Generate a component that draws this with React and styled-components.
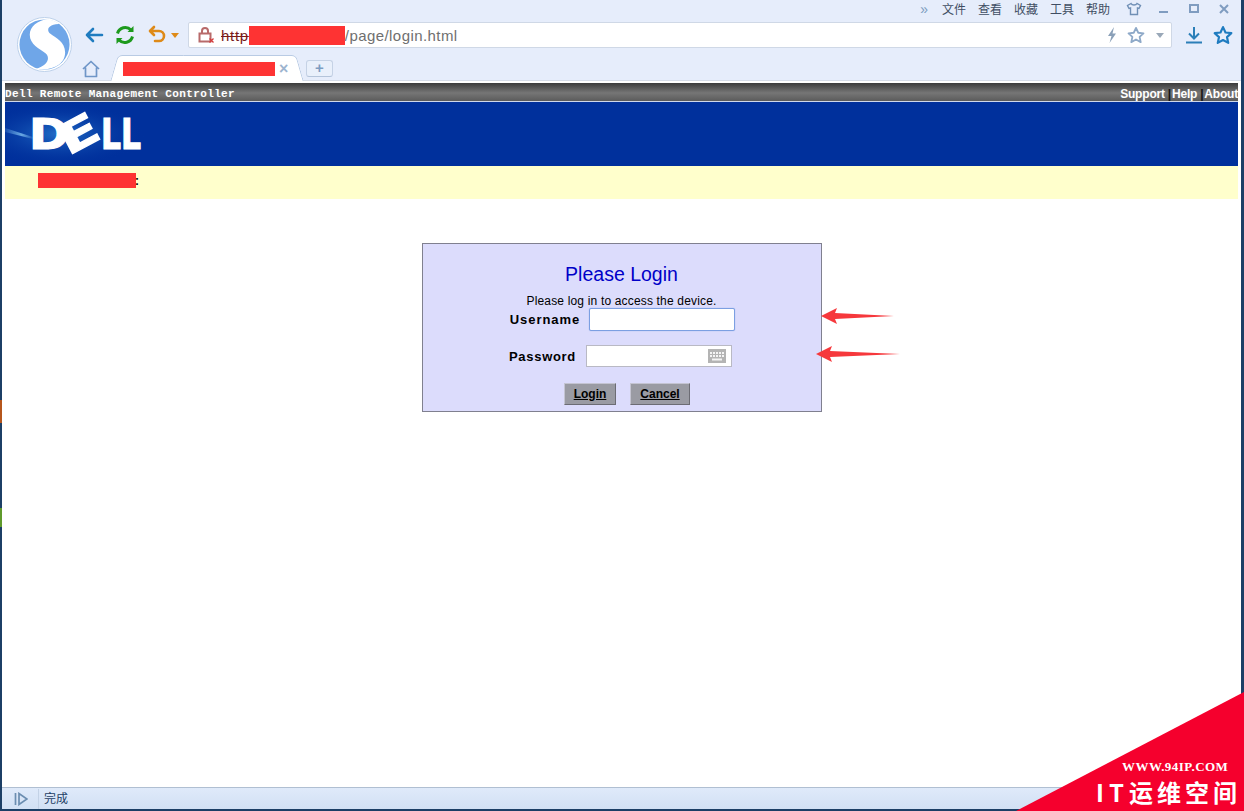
import React from "react";
import styled, { createGlobalStyle } from "styled-components";

const Global = createGlobalStyle`
  html, body { margin: 0; padding: 0; background: #fff; }
  * { box-sizing: border-box; }
`;

const UI = `"Liberation Sans", "Noto Sans CJK SC", sans-serif`;

const Screen = styled.div`
  position: relative;
  width: 1244px;
  height: 811px;
  overflow: hidden;
  font-family: ${UI};
`;

const Frame = styled.div`
  width: 100%;
  height: 100%;
  display: flex;
  flex-direction: column;
  border-left: 2px solid #1c3f66;
  border-right: 3px solid #1c3f66;
  border-bottom: 2px solid #1c3f66;
`;

const Chrome = styled.header`
  flex: none;
  height: 81px;
  display: flex;
  background: #e6edfb;
`;

const LogoCell = styled.div`
  flex: none;
  width: 82px;
  padding: 16px 0 0 14px;
`;

const ChromeRows = styled.div`
  flex: 1;
  min-width: 0;
  display: flex;
  flex-direction: column;
`;

const MenuRow = styled.div`
  height: 18px;
  display: flex;
  justify-content: flex-end;
  align-items: center;
  padding-right: 2px;
  color: #3f4d63;
  font-size: 12px;
`;

const MenuItem = styled.span`
  width: 24px;
  margin-left: 12px;
  font-family: "Noto Sans CJK SC", sans-serif;
  line-height: 18px;
  white-space: nowrap;
`;

const WinButton = styled.span`
  width: 30px;
  display: flex;
  justify-content: center;
  margin-left: ${(p) => p.$left || 0}px;
`;

const Chevrons = styled.span`
  color: #7c9cc0;
  font-size: 14px;
  margin-right: 2px;
`;

const NavRow = styled.div`
  height: 34px;
  display: flex;
  align-items: center;
`;

const NavIcon = styled.span`
  flex: none;
  display: flex;
  align-items: center;
  margin-left: ${(p) => p.$left || 0}px;
  margin-bottom: ${(p) => p.$bottom || 0}px;
`;

const UrlBar = styled.div`
  flex: none;
  width: 984px;
  height: 26px;
  margin: 0 0 0 9px;
  display: flex;
  align-items: center;
  background: #fff;
  border: 1px solid #cfd8e6;
  border-radius: 2px;
  padding: 0 7px 0 9px;
  font-size: 15px;
`;

const UrlScheme = styled.span`
  margin-left: 6px;
  color: #7a1a1a;
  letter-spacing: 0.7px;
  text-decoration: line-through;
`;

const Redacted = styled.span`
  display: inline-block;
  flex: none;
  background: #fe3333;
  width: ${(p) => p.$w}px;
  height: ${(p) => p.$h}px;
`;

const UrlPath = styled.span`
  color: #6f6f6f;
  flex: 1;
  letter-spacing: 0.43px;
`;

const TabRow = styled.div`
  height: 29px;
  display: flex;
  align-items: flex-end;
`;

const Tab = styled.div`
  position: relative;
  flex: none;
  width: 186px;
  height: 26px;
  margin-left: 14px;
  display: flex;
  align-items: center;
  padding: 1px 0 0 9px;
  &::before, &::after {
    content: "";
    position: absolute;
    top: 0;
    bottom: 0;
    width: 60%;
    background: #fff;
    border-top: 1px solid #b9cbe4;
    z-index: 0;
  }
  &::before {
    left: 0;
    border-left: 1px solid #b9cbe4;
    border-top-left-radius: 5px;
    transform: skewX(-16deg);
  }
  &::after {
    right: 0;
    border-right: 1px solid #b9cbe4;
    border-top-right-radius: 5px;
    transform: skewX(16deg);
  }
  & > * { position: relative; z-index: 1; }
`;

const TabClose = styled.span`
  margin-left: 4px;
  color: #9db4cf;
  font-size: 16px;
  font-weight: bold;
  line-height: 1;
`;

const NewTab = styled.div`
  flex: none;
  width: 27px;
  height: 17px;
  margin: 0 0 4px 6px;
  border: 1px solid #c5d2e5;
  border-bottom-color: #b4c4da;
  border-radius: 3px;
  background: #e9f0fb;
  color: #7d9cc1;
  font-size: 15px;
  font-weight: bold;
  line-height: 14px;
  text-align: center;
`;

const Viewport = styled.main`
  flex: 1;
  min-height: 0;
  background: #fff;
  padding: 2px 3px 0;
  border-top: 1px solid #d6dde9;
  margin-top: -1px;
`;

const DracBar = styled.div`
  height: 19px;
  display: flex;
  justify-content: space-between;
  align-items: center;
  padding-top: 3px;
  background: linear-gradient(#3b3b3b 0, #5c5c5c 30%, #767676 55%, #5b5b5b 100%);
  border-bottom: 1px solid #cfd8ea;
  color: #fff;
  font-weight: bold;
`;

const DracTitle = styled.span`
  font-family: "Liberation Mono", monospace;
  font-size: 11px;
  letter-spacing: 0.37px;
  white-space: nowrap;
`;

const DracLinks = styled.nav`
  display: flex;
  font-size: 12px;
  letter-spacing: -0.2px;
`;

const DracLink = styled.span`
  & + &::before {
    content: "|";
    color: #111;
    margin: 0 1px 0 3px;
  }
`;

const Banner = styled.div`
  height: 64px;
  background: #00309c;
`;

const Notice = styled.div`
  height: 33px;
  display: flex;
  align-items: center;
  padding: 0 0 4px 33px;
  background: #ffffcc;
  color: #000;
  font-size: 12px;
  font-weight: bold;
`;

const NoticeColon = styled.span`
  margin-left: -1px;
`;

const Card = styled.section`
  position: relative;
  width: 400px;
  height: 169px;
  margin: 44px auto 0;
  padding-top: 18px;
  background: #dcdcfc;
  border: 1px solid #80808f;
  text-align: center;
`;

const Title = styled.h1`
  margin: 0;
  font-size: 19.5px;
  font-weight: normal;
  line-height: 24px;
  color: #0000c8;
`;

const Intro = styled.p`
  margin: 8px 0 0;
  font-size: 12px;
  letter-spacing: 0.17px;
  line-height: 14px;
  color: #000;
`;

const Field = styled.div`
  display: flex;
  justify-content: center;
  align-items: center;
  gap: ${(p) => (p.$focusRow ? 9 : 10)}px;
  margin-top: ${(p) => p.$top}px;
  padding-left: ${(p) => (p.$focusRow ? 2 : 0)}px;
  padding-right: ${(p) => (p.$focusRow ? 0 : 2)}px;
`;

const Label = styled.label`
  font-size: 13px;
  font-weight: bold;
  letter-spacing: ${(p) => p.$spacing}px;
  color: #000;
`;

const InputWrap = styled.div`
  position: relative;
  width: 146px;
  height: ${(p) => (p.$focused ? 23 : 22)}px;
  background: #fff;
  border: 1px solid ${(p) => (p.$focused ? "#7c9fe2" : "#b9b9c4")};
  border-radius: ${(p) => (p.$focused ? 2 : 0)}px;
  box-shadow: ${(p) => (p.$focused ? "0 0 1px #7c9fe2" : "none")};
  display: flex;
  justify-content: flex-end;
  align-items: center;
  padding-right: 5px;
`;

const Actions = styled.div`
  display: flex;
  justify-content: center;
  gap: 14px;
  margin-top: 16px;
  padding-left: 11px;
`;

const Btn = styled.span`
  width: ${(p) => p.$w}px;
  height: 22px;
  background: #9a9ba3;
  border: 1px solid;
  border-color: #c4c4d2 #6c6c74 #6c6c74 #c4c4d2;
  color: #000;
  font-size: 12px;
  font-weight: bold;
  line-height: 20px;
  text-decoration: underline;
`;

const Arrow = styled.svg`
  position: absolute;
  left: ${(p) => p.$x}px;
  top: ${(p) => p.$y}px;
`;

const StatusBar = styled.footer`
  flex: none;
  height: 22px;
  display: flex;
  align-items: center;
  background: linear-gradient(#dfeafa, #d2e0f4);
  border-top: 1px solid #b0bfd2;
  color: #1f3f66;
  font-size: 12px;
`;

const StatusIcon = styled.span`
  width: 36px;
  display: flex;
  justify-content: center;
  padding-left: 1px;
`;

const StatusText = styled.span`
  padding-left: 5px;
  border-left: 1px solid #c3d2e6;
  line-height: 17px;
  height: 20px;
  font-family: "Noto Sans CJK SC", sans-serif;
`;

const DesktopEdge = styled.div`
  position: absolute;
  left: 0;
  top: 0;
  bottom: 0;
  width: 2px;
  background: linear-gradient(#1c3f66 0 400px, #b5561c 400px 423px, #1c3f66 423px 508px, #5f9a2c 508px 527px, #1c3f66 527px);
`;

const Ribbon = styled.svg`
  position: absolute;
  left: 1016px;
  top: 692px;
`;

const RibbonSite = styled.div`
  position: absolute;
  left: 1122px;
  top: 759px;
  color: #fff;
  font: bold 13px "Liberation Serif", serif;
  letter-spacing: 0.45px;
  white-space: nowrap;
`;

const RibbonName = styled.div`
  position: absolute;
  left: 1096px;
  top: 776px;
  color: #fff;
  font: bold 24px/32px "Noto Sans CJK SC", sans-serif;
  letter-spacing: 4px;
  white-space: nowrap;
`;

const RibbonLatin = styled.span`
  letter-spacing: 5px;
`;

const BrowserLogo = () => (
  <svg width="57" height="57" viewBox="0 0 58 58">
    <defs>
      <clipPath id="disc"><circle cx="29" cy="29" r="26" /></clipPath>
    </defs>
    <circle cx="29" cy="29" r="27.5" fill="#fff" stroke="#bcd0ea" />
    <circle cx="29" cy="29" r="25.5" fill="#6fa6e8" />
    <path clipPath="url(#disc)" d="M42 3C28 1 14 8 14 19C14 29 24 33 30 38C35 42 33 50 20 54C32 56 50 52 50 37C50 26 40 22 35 18C30 14 33 8 47 8C46 6 44 4 42 3Z" fill="#fff" />
  </svg>
);

const DellLogo = () => (
  <svg width="240" height="64" viewBox="0 0 240 64">
    <defs>
      <linearGradient id="flare" x1="0" x2="1" y1="0" y2="0">
        <stop offset="0" stopColor="#7fc0f0" stopOpacity="0.15" />
        <stop offset="0.6" stopColor="#7fc0f0" stopOpacity="0.8" />
        <stop offset="1" stopColor="#7fc0f0" stopOpacity="0.1" />
      </linearGradient>
      <radialGradient id="halo">
        <stop offset="0" stopColor="#2f86d8" stopOpacity="0.75" />
        <stop offset="1" stopColor="#00309c" stopOpacity="0" />
      </radialGradient>
    </defs>
    <ellipse cx="55" cy="32" rx="85" ry="32" fill="url(#halo)" />
    <path d="M0 26 L28 35 L28 37 L0 30Z" fill="url(#flare)" />
    <g fill="#fff" stroke="#fff" strokeWidth="1.2" fontFamily="DejaVu Sans, sans-serif" fontWeight="bold" fontSize="42">
      <text x="24" y="47" textLength="40" lengthAdjust="spacingAndGlyphs">D</text>
      <text x="0" y="0" textLength="40" lengthAdjust="spacingAndGlyphs" transform="translate(63 54) rotate(-28)">E</text>
      <text x="96" y="47" textLength="40" lengthAdjust="spacingAndGlyphs">LL</text>
    </g>
  </svg>
);

const RedArrow = ({ x, y, w }) => (
  <Arrow $x={x} $y={y} width={w} height="16" viewBox={`0 0 ${w} 16`}>
    <path d={`M0 8 L16 0 L14 5 L${w} 8 L14 11 L16 16Z`} fill="#f6383c" />
  </Arrow>
);

export default function App() {
  return (
    <Screen>
      <Global />
      <Frame>
        <Chrome>
          <LogoCell><BrowserLogo /></LogoCell>
          <ChromeRows>
            <MenuRow>
              <Chevrons>»</Chevrons>
              {["文件", "查看", "收藏", "工具", "帮助"].map((m) => (
                <MenuItem key={m}>{m}</MenuItem>
              ))}
              <WinButton $left={9}>
                <svg width="16" height="14" viewBox="0 0 16 14" fill="none" stroke="#6f8fb5" strokeWidth="1.4">
                  <path d="M5 1.500 1.500 3.500 3 6.500 4.500 6V12.500H11.500V6L13 6.500 14.500 3.500 11 1.500C10 3.500 6 3.500 5 1.500Z" />
                </svg>
              </WinButton>
              <WinButton>
                <svg width="12" height="12" viewBox="0 0 12 12"><rect x="1" y="8" width="9" height="2" fill="#7f9cc0" /></svg>
              </WinButton>
              <WinButton>
                <svg width="12" height="12" viewBox="0 0 12 12" fill="none" stroke="#7f9cc0" strokeWidth="2"><rect x="2" y="2" width="8" height="7" /></svg>
              </WinButton>
              <WinButton>
                <svg width="12" height="12" viewBox="0 0 12 12" stroke="#7f9cc0" strokeWidth="2"><path d="M2 2l8 8M10 2l-8 8" /></svg>
              </WinButton>
            </MenuRow>
            <NavRow>
              <NavIcon>
                <svg width="20" height="18" viewBox="0 0 20 18" fill="none" stroke="#1f7cc0" strokeWidth="2.6" strokeLinecap="round" strokeLinejoin="round"><path d="M18 9H3M9 3 3 9l6 6" /></svg>
              </NavIcon>
              <NavIcon $left={10}>
                <svg width="22" height="22" viewBox="0 0 22 22" fill="none" stroke="#1d9a1d" strokeWidth="3">
                  <path d="M3.500 9.500A8 8 0 0 1 17 6" /><path d="M18.500 12.500A8 8 0 0 1 5 16" />
                  <path d="M19.500 2v6h-6z" fill="#1d9a1d" stroke="none" /><path d="M2.500 20v-6h6z" fill="#1d9a1d" stroke="none" />
                </svg>
              </NavIcon>
              <NavIcon $left={12}>
                <svg width="20" height="20" viewBox="0 0 20 20" fill="none" stroke="#de8a18" strokeWidth="2.6" strokeLinecap="round" strokeLinejoin="round"><path d="M6 2 2 6l4 4M2.500 6H11a5 5 0 0 1 0 10H7" /></svg>
              </NavIcon>
              <NavIcon $left={3}>
                <svg width="8" height="5" viewBox="0 0 8 5"><path d="M0 0h8L4 5z" fill="#de8a18" /></svg>
              </NavIcon>
              <UrlBar>
                <svg width="17" height="18" viewBox="0 0 17 18" fill="none">
                  <rect x="1.500" y="7.500" width="11" height="8" stroke="#b86a6a" strokeWidth="2" />
                  <path d="M4 7V5a3 3 0 0 1 6 0v2" stroke="#b86a6a" strokeWidth="2" />
                  <path d="M11.500 12.500l4 4M15.500 12.500l-4 4" stroke="#d23b3b" strokeWidth="1.3" />
                </svg>
                <UrlScheme>http</UrlScheme>
                <Redacted $w={96} $h={19} />
                <UrlPath>/page/login.html</UrlPath>
                <svg width="12" height="16" viewBox="0 0 12 16"><path d="M8 0 2 9h3.500L3.500 16 10 6.500H6.500Z" fill="#8aa0b8" /></svg>
                <NavIcon $left={9}>
                  <svg width="18" height="18" viewBox="0 0 24 24" fill="none" stroke="#8ea9c8" strokeWidth="2.4" strokeLinejoin="round"><path d="M12 2.500l3 6.500 7 .8-5.200 4.700 1.500 7L12 18l-6.300 3.500 1.500-7L2 9.800 9 9z" /></svg>
                </NavIcon>
                <NavIcon $left={11}>
                  <svg width="8" height="5" viewBox="0 0 8 5"><path d="M0 0h8L4 5z" fill="#9aa8b8" /></svg>
                </NavIcon>
              </UrlBar>
              <NavIcon $left={14}>
                <svg width="16" height="18" viewBox="0 0 16 18" fill="none" stroke="#2b7fb8" strokeWidth="2"><path d="M8 1v11M3 7.500l5 5 5-5M0 16.500h16" /></svg>
              </NavIcon>
              <NavIcon $left={11}>
                <svg width="20" height="20" viewBox="0 0 24 24" fill="none" stroke="#1f7cc0" strokeWidth="2.6" strokeLinejoin="round"><path d="M12 2.500l3 6.500 7 .8-5.200 4.700 1.500 7L12 18l-6.300 3.500 1.500-7L2 9.800 9 9z" /></svg>
              </NavIcon>
            </NavRow>
            <TabRow>
              <NavIcon $left={-2} $bottom={3}>
                <svg width="18" height="18" viewBox="0 0 18 18" fill="none" stroke="#6f96c8" strokeWidth="1.700" strokeLinejoin="round"><path d="M1 9 9 1.500 17 9M3.500 7.500V16.500H14.500V7.500" /></svg>
              </NavIcon>
              <Tab>
                <Redacted $w={152} $h={14} />
                <TabClose>×</TabClose>
              </Tab>
              <NewTab>+</NewTab>
            </TabRow>
          </ChromeRows>
        </Chrome>
        <Viewport>
          <DracBar>
            <DracTitle>Dell Remote Management Controller</DracTitle>
            <DracLinks>
              <DracLink>Support</DracLink>
              <DracLink>Help</DracLink>
              <DracLink>About</DracLink>
            </DracLinks>
          </DracBar>
          <Banner><DellLogo /></Banner>
          <Notice><Redacted $w={98} $h={15} /><NoticeColon>:</NoticeColon></Notice>
          <Card>
            <Title>Please Login</Title>
            <Intro>Please log in to access the device.</Intro>
            <Field $top={0} $focusRow>
              <Label $spacing={0.95}>Username</Label>
              <InputWrap $focused />
            </Field>
            <Field $top={14}>
              <Label $spacing={0.7}>Password</Label>
              <InputWrap>
                <svg width="18" height="14" viewBox="0 0 18 14">
                  <rect width="18" height="14" fill="#b4b4b4" />
                  <path d="M2 3h2v2H2zM5 3h2v2H5zM8 3h2v2H8zM11 3h2v2h-2zM14 3h2v2h-2zM2 6h2v2H2zM5 6h2v2H5zM8 6h2v2H8zM11 6h2v2h-2zM14 6h2v2h-2zM4 9.500h10v2H4z" fill="#f4f4f4" />
                </svg>
              </InputWrap>
            </Field>
            <Actions>
              <Btn $w={52}>Login</Btn>
              <Btn $w={60}>Cancel</Btn>
            </Actions>
            <RedArrow x={398} y={64} w={73} />
            <RedArrow x={393} y={102} w={84} />
          </Card>
        </Viewport>
        <StatusBar>
          <StatusIcon>
            <svg width="14" height="14" viewBox="0 0 14 14" fill="none" stroke="#6b8db0" strokeWidth="1.700"><path d="M1.500 1v12M5 1.500v11l8-5.500z" /></svg>
          </StatusIcon>
          <StatusText>完成</StatusText>
        </StatusBar>
      </Frame>
      <DesktopEdge />
      <Ribbon width="228" height="119" viewBox="0 0 228 119">
        <path d="M0 119 228 0V119Z" fill="#f5002d" />
      </Ribbon>
      <RibbonSite>WWW.94IP.COM</RibbonSite>
      <RibbonName><RibbonLatin>IT</RibbonLatin>运维空间</RibbonName>
    </Screen>
  );
}
